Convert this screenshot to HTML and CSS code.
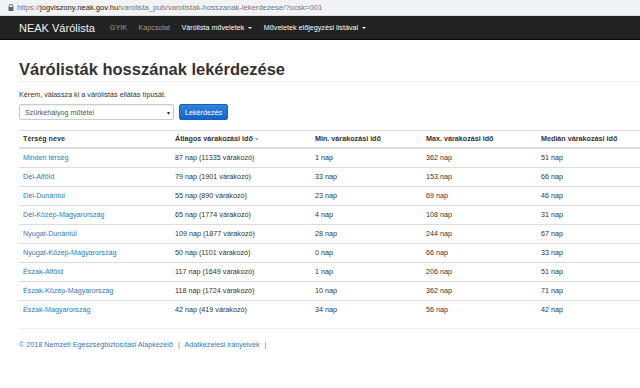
FILE: index.html
```html
<!DOCTYPE html>
<html lang="hu">

<head>
  <meta charset="UTF-8" />
  <meta name="viewport" content="width=device-width, initial-scale=1.0" />
  <title>NEAK Várólista</title>
  <link rel="stylesheet" href="styles.css">
</head>

<body>

  <div class="addressbar">
    <svg class="lock" width="6" height="7" viewBox="0 0 6 7">
      <path d="M1.2 3V2a1.8 1.8 0 0 1 3.6 0v1" fill="none" stroke="#666" stroke-width="0.9" />
      <rect x="0.5" y="3" width="5" height="4" rx="0.5" fill="#666" />
    </svg>
    <span class="url"><span class="dim">https://</span>jogviszony.neak.gov.hu<span class="dim">/varolista_pub/varolistak-hosszanak-lekerdezese/?ocsk=001</span></span>
  </div>

  <div class="navbar">
    <div class="brand">NEAK Várólista</div>
    <div class="nav-links">
      <a class="muted">GYIK</a>
      <a class="muted">Kapcsolat</a>
      <a>Várólista műveletek <span class="caret"></span></a>
      <a>Műveletek előjegyzési listával <span class="caret"></span></a>
    </div>
  </div>

  <div class="container">
    <h1>Várólisták hosszának lekérdezése</h1>

    <p class="label">Kérem, válassza ki a várólistás ellátás típusát.</p>
    <div class="query-form">
      <div class="select">
        <span>Szürkehályog műtétei</span>
        <span class="arrow">▾</span>
      </div>
      <button class="btn">Lekérdezés</button>
    </div>

    <table class="results">
      <thead>
        <tr>
          <th class="c1">Térség neve</th>
          <th class="c2">Átlagos várakozási idő <span class="sort">▾</span></th>
          <th class="c3">Min. várakozási idő</th>
          <th class="c4">Max. várakozási idő</th>
          <th>Medián várakozási idő</th>
        </tr>
      </thead>
      <tbody id="rows"></tbody>
    </table>

    <div class="footer">
      <a>© 2018 Nemzeti Egészségbiztosítási Alapkezelő</a>
      <span class="sep">|</span>
      <a>Adatkezelési irányelvek</a>
      <span class="sep">|</span>
    </div>
  </div>

  <script>
    const data = [
      ['Minden térség', 87, 11335, 1, 362, 51],
      ['Dél-Alföld', 79, 1901, 33, 153, 66],
      ['Dél-Dunántúl', 55, 890, 23, 69, 46],
      ['Dél-Közép-Magyarország', 65, 1774, 4, 108, 31],
      ['Nyugat-Dunántúl', 109, 1877, 28, 244, 67],
      ['Nyugat-Közép-Magyarország', 50, 1101, 0, 66, 33],
      ['Észak-Alföld', 117, 1649, 1, 206, 51],
      ['Észak-Közép-Magyarország', 118, 1724, 10, 362, 71],
      ['Észak-Magyarország', 42, 419, 34, 56, 42]
    ];

    const tbody = document.getElementById('rows');
    data.forEach(r => {
      const tr = document.createElement('tr');
      tr.innerHTML =
        `<td><a>${r[0]}</a></td>` +
        `<td>${r[1]} nap (${r[2]} várakozó)</td>` +
        `<td>${r[3]} nap</td>` +
        `<td>${r[4]} nap</td>` +
        `<td>${r[5]} nap</td>`;
      tbody.appendChild(tr);
    });
  </script>
</body>

</html>
```

FILE: styles.css
```css
body {
  margin: 0;
  font-family: 'Liberation Sans', Arial, sans-serif;
  font-size: 7.2px;
  color: #333;
  background: #fff;
  overflow: hidden;
}

a {
  color: #337ab7;
  text-decoration: none;
}

.addressbar {
  height: 15px;
  background: #f1f3f4;
  border-bottom: 1px solid #dadce0;
  display: flex;
  align-items: center;
  padding-left: 8px;
  gap: 3px;
}

.url {
  font-size: 7.65px;
  color: #222;
  white-space: nowrap;
}

.url .dim {
  color: #777;
}

.navbar {
  height: 23px;
  background: #222;
  border-bottom: 1px solid #080808;
  display: flex;
  align-items: center;
  padding-left: 19px;
}

.brand {
  font-size: 11px;
  color: #f2f2f2;
  margin-right: 15px;
}

.nav-links {
  display: flex;
  gap: 11.5px;
  font-size: 7.2px;
}

.nav-links a {
  color: #fff;
}

.nav-links a.muted {
  color: #9d9d9d;
}

.caret {
  display: inline-block;
  width: 0;
  height: 0;
  margin-left: 2px;
  vertical-align: middle;
  border-top: 2px solid #fff;
  border-left: 2px solid transparent;
  border-right: 2px solid transparent;
}

.container {
  padding-left: 19px;
}

h1 {
  font-size: 16.5px;
  line-height: 19px;
  margin: 20px 0 0;
  padding-bottom: 2px;
  border-bottom: 1px solid #eee;
  color: #333;
}

.label {
  margin: 8px 0 0;
  line-height: 10px;
}

.query-form {
  display: flex;
  align-items: center;
  gap: 5px;
  margin-top: 4px;
}

.select {
  width: 145px;
  height: 14px;
  border: 1px solid #ccc;
  border-radius: 2px;
  box-shadow: inset 0 1px 1px rgba(0, 0, 0, 0.075);
  display: flex;
  justify-content: space-between;
  align-items: center;
  padding: 0 3px 0 5px;
  color: #555;
}

.select .arrow {
  color: #333;
  font-size: 6px;
}

.btn {
  height: 16px;
  width: 49px;
  padding: 0;
  border: 1px solid #1560b8;
  border-radius: 2px;
  background: linear-gradient(#2d85dc, #1565c4);
  color: #fff;
  font-family: inherit;
  font-size: 7.2px;
}

.results {
  width: 100%;
  border-collapse: collapse;
  margin-top: 10px;
}

.results th,
.results td {
  text-align: left;
  border-top: 1px solid #ddd;
  line-height: 10px;
  padding: 4px 4px;
  white-space: nowrap;
}

.results th {
  padding: 3px 4px;
  font-weight: bold;
  border-bottom: 2px solid #ddd;
}

.results th.c1 { width: 144px; }
.results th.c2 { width: 132px; }
.results th.c3 { width: 103px; }
.results th.c4 { width: 107px; }

.sort {
  color: #aaa;
  font-weight: normal;
  font-size: 6px;
}

.footer {
  margin-top: 9px;
  border-top: 1px solid #eee;
  padding-top: 11px;
  line-height: 10px;
}

.footer .sep {
  color: #777;
  margin: 0 3px;
}
```
